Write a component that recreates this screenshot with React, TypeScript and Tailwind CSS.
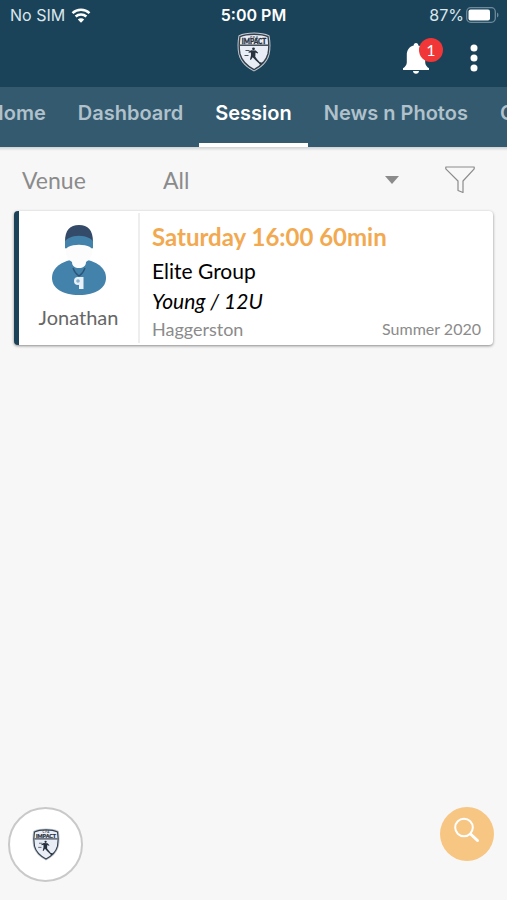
import { useState } from 'react';

const tabsBefore = ['Home', 'Dashboard'];
const tabsAfter = ['News n Photos', 'Chat'];

function Tab({ label, active }: { label: string; active?: boolean }) {
    return (
        <a
            href="#"
            aria-current={active ? 'page' : undefined}
            className={`flex h-15 shrink-0 items-center border-b-4 px-4 pb-1 text-xl font-semibold whitespace-nowrap ${
                active
                    ? 'border-white text-white'
                    : 'border-transparent text-[#b0c1cb]'
            }`}
        >
            {label}
        </a>
    );
}

function Crest({ className }: { className?: string }) {
    return (
        <svg viewBox="0 0 34 40" className={className} aria-hidden>
            <path
                d="M17 .6C11 .6 5.500 1.500 1.500 3.500.2 10 .2 17 1.500 22.500 3.500 30.500 10 36 17 39.400 24 36 30.500 30.500 32.500 22.500 33.800 17 33.800 10 32.500 3.500 28.500 1.500 23 .6 17 .6Z"
                fill="#c3cad3"
            />
            <path
                d="M17 2.200C11.500 2.200 6.500 3 3 4.700 2 10.500 2 17 3 22 5 29.500 11 34.500 17 37.600 23 34.500 29 29.500 31 22 32 17 32 10.500 31 4.700 27.500 3 22.500 2.200 17 2.200Z"
                fill="#e9edf5"
                stroke="#35404c"
                strokeWidth="1.400"
            />
            <path d="M3 13.200h28" stroke="#35404c" strokeWidth="1.400" />
            <text
                x="17"
                y="6.500"
                textAnchor="middle"
                fontSize="3.500"
                fontWeight="700"
                fill="#35404c"
            >
                C F A
            </text>
            <text
                x="17"
                y="12"
                textAnchor="middle"
                fontSize="6.500"
                fontWeight="900"
                fill="#26313d"
                stroke="#26313d"
                strokeWidth=".3"
            >
                IMPACT
            </text>
            <circle cx="16.500" cy="16.800" r="1.400" fill="#26313d" />
            <path
                d="M14.200 18.300l4.600.1 2.400 2.400-.6.8-2.100-1.100-.2 4.300 2 2.600 3 3.400-.9.9-3.600-3.200-3.100-3.200-1.800 2.600-.9-.3 1-4.300-.1-2.900-2.300.4-.1-1Z"
                fill="#26313d"
            />
            <path
                d="M8.500 18.500h4M7.500 23.500h4M24 31.500l2-1.500"
                stroke="#35404c"
                strokeWidth=".9"
            />
            <circle cx="23.500" cy="31.500" r="1.200" fill="#26313d" />
        </svg>
    );
}

function CoachAvatar() {
    return (
        <svg viewBox="0 0 54 70" className="h-[70px] w-[54px]" aria-hidden>
            <path
                d="M20 35c-9 1-20 7-20 18 0 10 10 17 27 17s27-7 27-17c0-11-11-17-20-18Z"
                fill="#4382ab"
            />
            <path
                d="M14 20h26v8c0 4-3 7-6 9 0 4-3 6-7 6s-7-2-7-6c-3-2-6-5-6-9Z"
                fill="#fcfcfc"
            />
            <path
                d="M13 17C13 5 18 0 27 0s14 5 14 17l-4-2c-6-4-14-4-20 0Z"
                fill="#334b69"
            />
            <path
                d="M13 16c1-1 2-2 4-3 6-3 14-3 20 0 2 1 3 2 4 3v7c-1 1-2 0-3-1-6-3-16-3-22 0-1 1-2 2-3 1Z"
                fill="#4382ab"
            />
            <path
                d="M21 43c1 3 3 6 6 8 3-2 5-5 6-8"
                fill="none"
                stroke="#2e5475"
                strokeWidth="1.300"
            />
            <circle cx="26" cy="56" r="4" fill="#e8f1f7" />
            <path d="M25 52h6.500v12H27v-6Z" fill="#e8f1f7" />
            <circle cx="26" cy="56" r="1.800" fill="#87b3d0" />
        </svg>
    );
}

function StatusBar() {
    return (
        <div className="grid h-7 grid-cols-3 items-center px-2 pt-0.5 font-['Inter',sans-serif] text-base leading-5 text-[#dce6eb]">
            <div className="flex items-center gap-1.5 pl-0.5">
                <span>No SIM</span>
                <svg viewBox="0 0 20 15" className="h-[15px] w-5" aria-hidden>
                    <path
                        d="M1.500 5.200a12.500 12.500 0 0 1 17 0M4.600 8.500a8 8 0 0 1 10.800 0"
                        fill="none"
                        stroke="#fff"
                        strokeWidth="2.500"
                    />
                    <path d="M10 14.800l-3.200-3.300a4.600 4.600 0 0 1 6.400 0Z" fill="#fff" />
                </svg>
            </div>
            <div className="text-center font-semibold text-white">5:00 PM</div>
            <div className="flex items-center justify-end gap-0.5">
                <span>87%</span>
                <svg viewBox="0 0 33 16" className="h-4 w-[33px]" aria-hidden>
                    <rect
                        x=".7"
                        y=".7"
                        width="28.600"
                        height="14.600"
                        rx="4"
                        fill="none"
                        stroke="#6f8b9b"
                        strokeWidth="1.300"
                    />
                    <rect x="2.500" y="2.500" width="21.500" height="11" rx="2" fill="#fff" />
                    <path d="M31 5.500c2 1 2 4 0 5Z" fill="#6f8b9b" />
                </svg>
            </div>
        </div>
    );
}

export default function App() {
    const [venue, setVenue] = useState('All');

    return (
        <div className="min-h-screen bg-[#f7f7f7] font-['Lato',sans-serif]">
            <header className="bg-[#1a435a]">
                <StatusBar />
                <div className="grid h-[59px] grid-cols-3 items-start px-6">
                    <span />
                    <Crest className="mt-1 h-10 w-[34px] justify-self-center" />
                    <div className="flex items-center justify-end gap-6 pt-2.5">
                        <button
                            type="button"
                            aria-label="Notifications"
                            className="relative h-10 w-10"
                        >
                            <svg
                                viewBox="0 0 26 31"
                                className="h-[31px] w-[26px]"
                                aria-hidden
                            >
                                <path
                                    d="M13 0c-1.500 0-2.300 1-2.300 2.600C6 3.700 3.800 7.500 3.800 12v7.500C3.800 22 2 24 0 25.300V27h26v-1.700c-2-1.300-3.800-3.300-3.800-5.800V12c0-4.500-2.200-8.300-6.900-9.400C15.300 1 14.500 0 13 0ZM10 28c.2 1.700 1.300 2.800 3 2.800s2.800-1.100 3-2.800Z"
                                    fill="#fff"
                                />
                            </svg>
                            <span className="absolute top-0 right-0 flex size-6 items-center justify-center rounded-full bg-[#f13637] text-base text-white">
                                1
                            </span>
                        </button>
                        <button type="button" aria-label="More options" className="w-4">
                            <svg viewBox="0 0 16 28" className="h-7 w-4" aria-hidden>
                                <circle cx="7" cy="4" r="3.500" fill="#fff" />
                                <circle cx="7" cy="14" r="3.500" fill="#fff" />
                                <circle cx="7" cy="24" r="3.500" fill="#fff" />
                            </svg>
                        </button>
                    </div>
                </div>
                {/* the active tab stays centred, its neighbours run off both edges */}
                <nav
                    aria-label="Sections"
                    className="flex overflow-hidden bg-[#335a6f] font-['Inter',sans-serif]"
                >
                    <div className="flex w-0 flex-1 justify-end">
                        {tabsBefore.map((label) => (
                            <Tab key={label} label={label} />
                        ))}
                    </div>
                    <Tab label="Session" active />
                    <div className="flex w-0 flex-1">
                        {tabsAfter.map((label) => (
                            <Tab key={label} label={label} />
                        ))}
                    </div>
                </nav>
                <div className="h-1 bg-linear-to-b from-[#d0d2d3] to-[#f7f7f7]" />
            </header>

            <main className="px-3.5">
                <div className="flex h-15 items-center pr-4 pb-0.5 pl-2 text-[23px] text-[#8b8b8b]">
                    <label htmlFor="venue" className="w-[141px]">
                        Venue
                    </label>
                    <div className="grid flex-1 items-center">
                        <select
                            id="venue"
                            value={venue}
                            onChange={(e) => setVenue(e.target.value)}
                            className="col-start-1 row-start-1 appearance-none bg-transparent outline-none"
                        >
                            <option>All</option>
                            <option>Haggerston</option>
                        </select>
                        <svg
                            viewBox="0 0 14 8"
                            className="pointer-events-none col-start-1 row-start-1 h-2 w-3.5 justify-self-end"
                            aria-hidden
                        >
                            <path d="M0 0h14L7 8Z" fill="#8b8b8b" />
                        </svg>
                    </div>
                    <button type="button" aria-label="Filter" className="mr-0.5 ml-[46px]">
                        <svg viewBox="0 0 30 28" className="h-7 w-[30px]" aria-hidden>
                            <path
                                d="M.8 1h28.400v1.800L18 15v11.500l-5-2V15L.8 2.800Z"
                                fill="none"
                                stroke="#8b8b8b"
                                strokeWidth="1.200"
                                strokeLinejoin="round"
                            />
                        </svg>
                    </button>
                </div>

                <article className="flex rounded border-l-5 border-[#1a435a] bg-white shadow-[0_1px_3px_rgba(0,0,0,0.45)]">
                    <div className="my-0.5 flex w-[121px] shrink-0 flex-col items-center border-r-2 border-[#eeeeee] pt-3">
                        <CoachAvatar />
                        <p className="mt-2.5 text-xl leading-6 text-[#666]">Jonathan</p>
                    </div>
                    <div className="flex-1 px-3 pt-2.5">
                        <h2 className="text-2xl leading-8 font-bold text-[#f2a950]">
                            Saturday 16:00 60min
                        </h2>
                        <p className="pt-1 text-[21px] leading-7 text-black">Elite Group</p>
                        <p className="text-[21px] leading-8 text-black italic">Young / 12U</p>
                        <div className="flex items-center justify-between pb-1 leading-6 text-[#8b8b8b]">
                            <span className="text-lg leading-6">Haggerston</span>
                            <span className="text-base leading-6">Summer 2020</span>
                        </div>
                    </div>
                </article>
            </main>

            <button
                type="button"
                aria-label="Club"
                className="fixed bottom-[18px] left-2 flex size-[75px] items-center justify-center rounded-full border-2 border-[#c9c9c9] bg-white"
            >
                <Crest className="h-[33px] w-7" />
            </button>
            <button
                type="button"
                aria-label="Search"
                className="fixed right-[13px] bottom-[39px] flex size-[54px] items-center justify-center rounded-full bg-[#f7c683] pb-2"
            >
                <svg viewBox="0 0 26 26" className="size-[26px]" aria-hidden>
                    <circle
                        cx="10"
                        cy="10.500"
                        r="8.800"
                        fill="none"
                        stroke="#fff"
                        strokeWidth="2"
                    />
                    <path
                        d="M16.500 17l7 6.500"
                        stroke="#fff"
                        strokeWidth="3"
                        strokeLinecap="round"
                    />
                </svg>
            </button>
        </div>
    );
}
